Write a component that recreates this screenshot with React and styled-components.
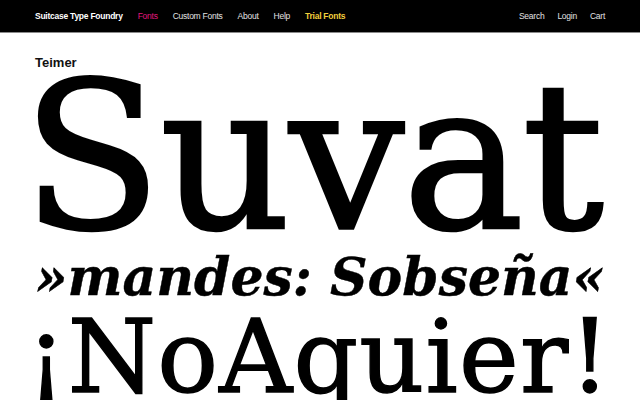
import React from "react";
import styled, { createGlobalStyle } from "styled-components";

const Global = createGlobalStyle`
  html, body { margin: 0; padding: 0; background: #fff; }
  body { overflow: hidden; width: 640px; height: 400px; }
  * { box-sizing: border-box; }
`;

const Page = styled.div`
  width: 640px;
  height: 400px;
  overflow: hidden;
  background: #fff;
`;

const Nav = styled.nav`
  height: 33px;
  background: #000;
  border-bottom: 1px solid #8a8a8a;
  display: flex;
  align-items: center;
  justify-content: space-between;
  padding: 0 35px;
  font-family: "Liberation Sans", Arial, sans-serif;
  font-size: 8.5px;
  letter-spacing: -0.25px;
`;

const NavGroup = styled.div`
  display: flex;
  align-items: center;
  gap: ${(p) => p.$gap || 16}px;
`;

const NavLink = styled.a`
  color: ${(p) => p.$color || "#e2e2e2"};
  font-weight: ${(p) => (p.$bold ? 700 : 400)};
  text-decoration: none;
  white-space: nowrap;
`;

const Main = styled.main`
  padding: 22px 0 0 35px;
`;

const Label = styled.div`
  font-family: "Liberation Sans", Arial, sans-serif;
  font-weight: 700;
  font-size: 13px;
  line-height: 16px;
  color: #111;
`;

const Specimen = styled.div`
  font-family: "DejaVu Serif", serif;
  color: #000;
  white-space: nowrap;
  font-size: ${(p) => p.$size}px;
  line-height: ${(p) => p.$lh}px;
  letter-spacing: ${(p) => p.$ls || 0}px;
  margin-left: ${(p) => p.$shift || 0}px;
  font-style: ${(p) => (p.$italic ? "italic" : "normal")};
  font-weight: ${(p) => (p.$bold ? 700 : 400)};
  -webkit-text-stroke: ${(p) => p.$stroke || 0}px #000;
`;

export default function App() {
  return (
    <Page>
      <Global />
      <Nav>
        <NavGroup $gap={15}>
          <NavLink $bold $color="#ffffff">Suitcase Type Foundry</NavLink>
          <NavLink $color="#e0177d">Fonts</NavLink>
          <NavLink>Custom Fonts</NavLink>
          <NavLink>About</NavLink>
          <NavLink>Help</NavLink>
          <NavLink $bold $color="#f2cf3c">Trial Fonts</NavLink>
        </NavGroup>
        <NavGroup $gap={13}>
          <NavLink>Search</NavLink>
          <NavLink>Login</NavLink>
          <NavLink>Cart</NavLink>
        </NavGroup>
      </Nav>
      <Main>
        <Label>Teimer</Label>
        <Specimen $size={204} $lh={174} $ls={-2} $shift={-13} $stroke={2.5}>Suvat</Specimen>
        <Specimen $size={52} $lh={63} $italic $bold $stroke={0.4}>»mandes: Sobseña«</Specimen>
        <Specimen $size={101} $lh={99} $ls={1.2} $shift={-9} $stroke={1.4}>¡NoAquier!</Specimen>
      </Main>
    </Page>
  );
}
